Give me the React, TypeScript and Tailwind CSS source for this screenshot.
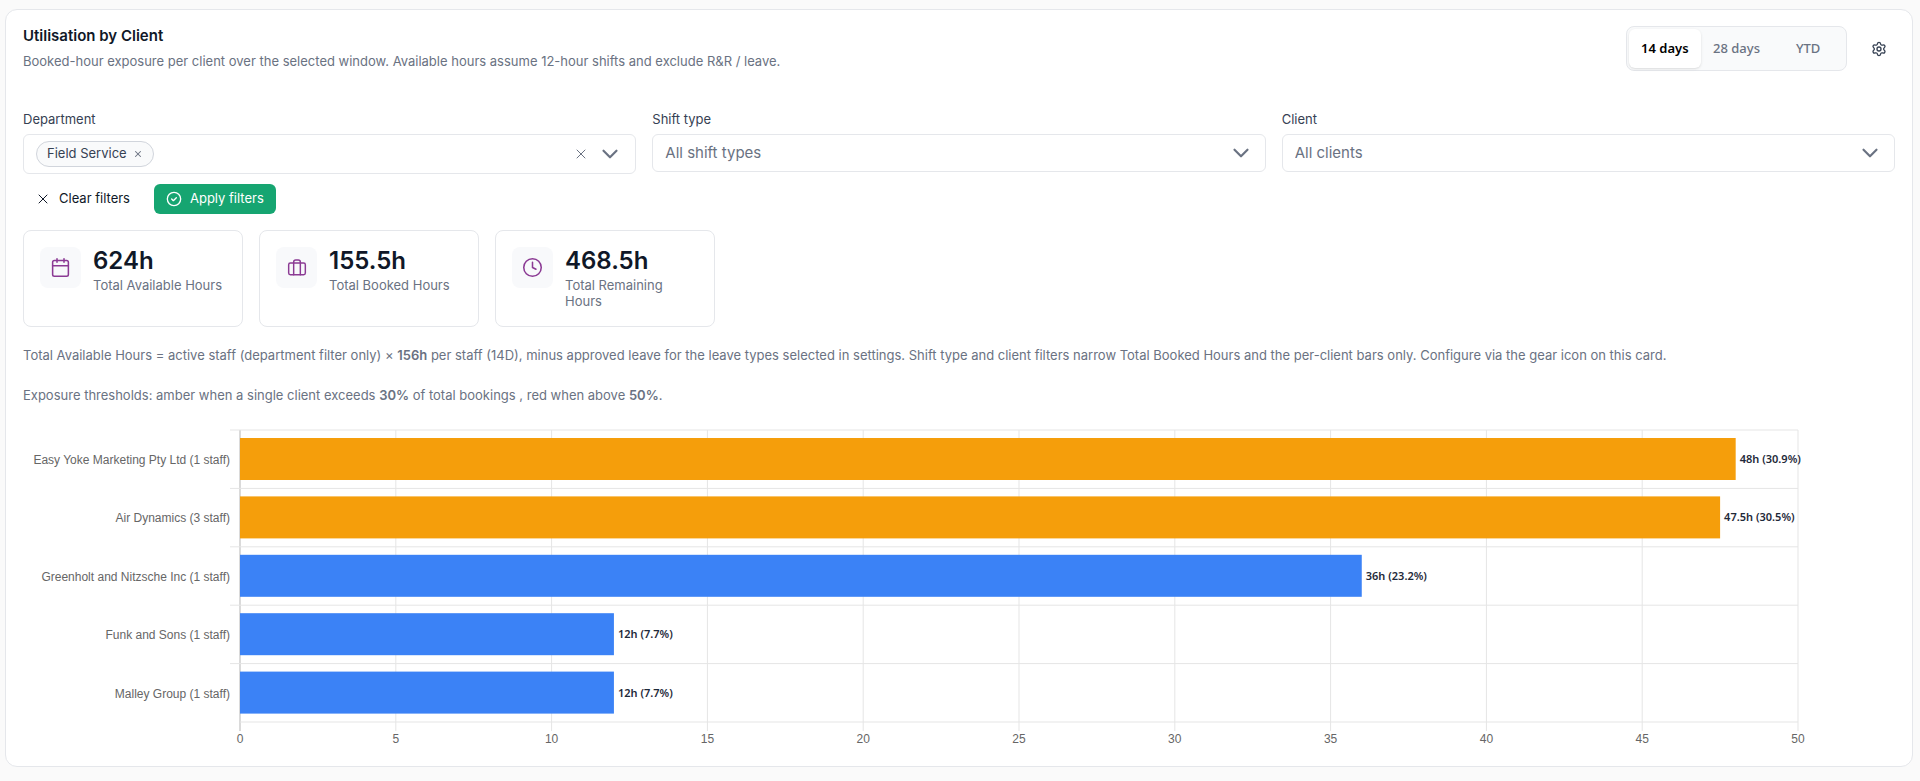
import { useState } from "react";
import type { ReactNode } from "react";
import { Calendar, ChevronDown, Clock, Settings, X } from "lucide-react";

const ranges = ["14 days", "28 days", "YTD"];

const clients = [
  { name: "Easy Yoke Marketing Pty Ltd", staff: 1, hours: 48, share: "30.9%", color: "#f59e0b" },
  { name: "Air Dynamics", staff: 3, hours: 47.5, share: "30.5%", color: "#f59e0b" },
  { name: "Greenholt and Nitzsche Inc", staff: 1, hours: 36, share: "23.2%", color: "#3b82f6" },
  { name: "Funk and Sons", staff: 1, hours: 12, share: "7.7%", color: "#3b82f6" },
  { name: "Malley Group", staff: 1, hours: 12, share: "7.7%", color: "#3b82f6" },
];

const MAX_HOURS = 50;
const ROW = 58.4;
const PLOT_HEIGHT = 292;
const ticks = [0, 5, 10, 15, 20, 25, 30, 35, 40, 45, 50];

function BaggageIcon() {
  return (
    <svg width="20" height="20" viewBox="0 0 24 24" fill="none" stroke="currentColor" strokeWidth="1.75" strokeLinejoin="round" strokeLinecap="round">
      <rect x="2" y="6" width="20" height="14" rx="2" />
      <path d="M8 20V5a2.5 2.5 0 0 1 2.5-2.5h3A2.5 2.5 0 0 1 16 5v15" />
    </svg>
  );
}

function ApplyIcon() {
  return (
    <svg width="16" height="16" viewBox="0 0 24 24" fill="none" stroke="currentColor" strokeWidth="2" strokeLinejoin="round" strokeLinecap="round">
      <circle cx="12" cy="12" r="10" />
      <path d="m8.5 12 2.5 2.5L15.5 10" />
    </svg>
  );
}

function StatCard({ icon, value, label }: { icon: ReactNode; value: string; label: string }) {
  return (
    <div className="flex min-h-[97px] items-start gap-3 rounded-lg border border-gray-200 p-4">
      <div className="flex size-[41px] shrink-0 items-center justify-center rounded-lg bg-[#f8f9fb] text-[#8b3a94]">
        {icon}
      </div>
      <div>
        <p className="text-2xl/7 font-semibold text-gray-900">{value}</p>
        <p className="mt-0.5 text-[13px]/4 text-gray-500">{label}</p>
      </div>
    </div>
  );
}

function SelectField({ id, label, placeholder }: { id: string; label: string; placeholder: string }) {
  return (
    <div>
      <label htmlFor={id} className="mb-[5px] block text-[13px]/5 text-gray-700">
        {label}
      </label>
      <div className="relative">
        <select
          id={id}
          className="h-[38px] w-full appearance-none rounded-md border border-gray-200 bg-white px-3 text-[15px] text-gray-500"
        >
          <option>{placeholder}</option>
        </select>
        <ChevronDown size={26} strokeWidth={2} className="pointer-events-none absolute top-[6px] right-3 text-gray-500" />
      </div>
    </div>
  );
}

function ExposureChart() {
  const pct = (value: number) => `${(value / MAX_HOURS) * 100}%`;

  return (
    <div className="pr-[97px] pl-[217px]">
      <svg width="100%" height="320" className="block overflow-visible" role="img" aria-label="Booked hours per client">
        {ticks.map((tick) => (
          <g key={tick}>
            <line x1={pct(tick)} x2={pct(tick)} y1="0" y2={PLOT_HEIGHT + 9} stroke={tick === 0 ? "#b5b5b5" : "#e5e5e5"} />
            <text x={pct(tick)} y="313" textAnchor="middle" className="fill-[#666] font-['Liberation_Sans'] text-xs">
              {tick}
            </text>
          </g>
        ))}
        {[0, 1, 2, 3, 4, 5].map((n) => (
          <line key={n} x1={n === 5 ? 0 : -10} x2="100%" y1={n * ROW} y2={n * ROW} stroke="#e5e5e5" />
        ))}
        {clients.map((client, i) => (
          <g key={client.name}>
            <text x="-10" y={i * ROW + 34} textAnchor="end" className="fill-[#666] font-['Liberation_Sans'] text-xs">
              {client.name} ({client.staff} staff)
            </text>
            <rect x="0" y={i * ROW + 8} width={pct(client.hours)} height="42" fill={client.color} />
            <text
              x={pct(client.hours)}
              dx="4"
              y={i * ROW + 33}
              className="fill-gray-800 font-['Noto_Sans'] text-[11px] font-semibold"
            >
              {client.hours}h ({client.share})
            </text>
          </g>
        ))}
      </svg>
    </div>
  );
}

export default function App() {
  const [range, setRange] = useState("14 days");

  return (
    <main className="min-h-screen bg-[#fafafa] pt-[9px] pr-[7px] pb-3.5 pl-[5px] font-['Inter',sans-serif]">
      <section className="rounded-xl border border-gray-200 bg-white px-[17px] pt-4 pb-4">
        <header className="flex items-start justify-between">
          <div>
            <h2 className="text-[15px]/5 font-semibold text-gray-900">Utilisation by Client</h2>
            <p className="mt-[5px] text-[13px]/5 text-gray-500">
              Booked-hour exposure per client over the selected window. Available hours assume 12-hour shifts and exclude R&amp;R / leave.
            </p>
          </div>
          <div className="flex items-center gap-6 pr-2">
            <div className="grid h-[45px] w-[221px] grid-cols-3 rounded-lg border border-gray-200 bg-gray-50 p-0.5 font-['Noto_Sans'] text-[13px] font-semibold">
              {ranges.map((r) => (
                <button
                  key={r}
                  type="button"
                  onClick={() => setRange(r)}
                  className={r === range ? "rounded-md bg-white text-black shadow-sm" : "rounded-md font-medium text-gray-500"}
                >
                  {r}
                </button>
              ))}
            </div>
            <button type="button" aria-label="Settings" className="text-gray-700">
              <Settings size={16} />
            </button>
          </div>
        </header>

        <div className="mt-[38px] grid grid-cols-3 items-start gap-4">
          <div>
            <label htmlFor="department" className="mb-[5px] block text-[13px]/5 text-gray-700">
              Department
            </label>
            <div className="flex h-10 items-center rounded-md border border-gray-200 pr-3 pl-3">
              <span className="flex h-[26px] shrink-0 items-center gap-1.5 rounded-full border border-gray-300 bg-gray-50 px-2.5 text-[13px] text-gray-700">
                Field Service
                <button type="button" aria-label="Remove Field Service" className="text-gray-500">
                  <X size={10} strokeWidth={2.5} />
                </button>
              </span>
              <input id="department" className="min-w-0 flex-1 outline-none" />
              <button type="button" aria-label="Clear department" className="mr-2 text-gray-500">
                <X size={16} strokeWidth={1.5} />
              </button>
              <button type="button" aria-label="Open department list" className="text-gray-500">
                <ChevronDown size={26} strokeWidth={2} />
              </button>
            </div>
          </div>
          <SelectField id="shift-type" label="Shift type" placeholder="All shift types" />
          <SelectField id="client" label="Client" placeholder="All clients" />
        </div>

        <div className="mt-2.5 flex gap-[14px] text-[13px]">
          <button type="button" className="flex h-[30px] items-center gap-2 pr-2.5 pl-3 text-gray-900">
            <X size={16} strokeWidth={1.5} />
            Clear filters
          </button>
          <button type="button" className="flex h-[30px] items-center gap-2 rounded-md bg-[#16a571] px-3 text-white">
            <ApplyIcon />
            Apply filters
          </button>
        </div>

        <div className="mt-4 grid max-w-[692px] grid-cols-3 gap-4">
          <StatCard icon={<Calendar size={21} strokeWidth={1.75} />} value="624h" label="Total Available Hours" />
          <StatCard icon={<BaggageIcon />} value="155.5h" label="Total Booked Hours" />
          <StatCard icon={<Clock size={21} strokeWidth={1.75} />} value="468.5h" label="Total Remaining Hours" />
        </div>

        <p className="mt-[18px] text-[13px]/5 text-gray-500">
          Total Available Hours = active staff (department filter only) × <b className="font-semibold">156h</b> per staff (14D), minus
          approved leave for the leave types selected in settings. Shift type and client filters narrow Total Booked Hours and the
          per-client bars only. Configure via the gear icon on this card.
        </p>
        <p className="mt-5 mb-[25px] text-[13px]/5 text-gray-500">
          Exposure thresholds: amber when a single client exceeds <b className="font-semibold">30%</b> of total bookings , red when above{" "}
          <b className="font-semibold">50%</b>.
        </p>

        <ExposureChart />
      </section>
    </main>
  );
}
